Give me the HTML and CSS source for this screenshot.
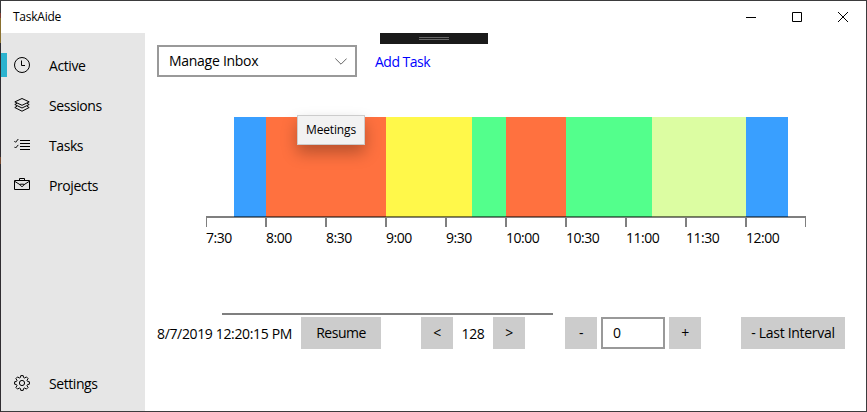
FILE: index.html
```html
<!DOCTYPE html>
<html lang="en">
<head>
<meta charset="utf-8">
<title>TaskAide</title>
<link rel="stylesheet" href="styles.css">
</head>
<body>
<div class="window">
  <header class="titlebar">
    <span class="title">TaskAide</span>
    <div class="caption-buttons">
      <svg viewBox="0 0 46 32"><path d="M18 16.5h10"/></svg>
      <svg viewBox="0 0 46 32"><path d="M18.5 11.5h9v9h-9z"/></svg>
      <svg viewBox="0 0 46 32"><path d="M18 11l10 10M28 11l-10 10"/></svg>
    </div>
  </header>
  <div class="body">
    <nav class="sidebar">
      <a class="nav-item active"><svg viewBox="0 0 16 16"><circle cx="8" cy="8" r="7.5"/><path d="M7.5 3.5v5h3.5"/></svg><span>Active</span></a>
      <a class="nav-item"><svg viewBox="0 0 16 16"><path d="M8 1.5l7.2 3.4L8 8.3.8 4.9zM3 6.3L.8 7.5 8 11l7.2-3.5L13 6.3M3 9.3L.8 10.5 8 14.2l7.2-3.7L13 9.3"/></svg><span>Sessions</span></a>
      <a class="nav-item"><svg viewBox="0 0 16 16"><path d="M6 3.5h10M6 6.5h10M6 9.5h10M6 12.5h10M.4 4.1l1.2 1.2L4.3 2M.4 9.8l1.2 1.2L4.3 7.9"/></svg><span>Tasks</span></a>
      <a class="nav-item"><svg viewBox="0 0 16 16"><path d="M.5 3.5h15v9H.5zM5.5 3.5v-2h5v2M1 4.5l5 3.2M15 4.5l-5 3.2M6.3 7.2h3.4v1.1L8.8 9.3H7.2l-.9-1z"/></svg><span>Projects</span></a>
      <a class="nav-item settings"><svg viewBox="0 0 16 16"><path d="M6.8.6h2.4l.4 1.9 1.1.5 1.7-1.1 1.7 1.7L13 5.3l.5 1.1 1.9.4v2.4l-1.9.4-.5 1.1 1.1 1.7-1.7 1.7-1.7-1.1-1.1.5-.4 1.9H6.8l-.4-1.9-1.1-.5-1.7 1.1-1.7-1.7L3 10.7l-.5-1.1-1.9-.4V6.8l1.9-.4L3 5.3 1.9 3.6l1.7-1.7L5.3 3l1.1-.5z"/><circle cx="8" cy="8" r="2.6"/></svg><span>Settings</span></a>
    </nav>
    <main class="content">
      <div class="debug-bar"></div>
      <div class="task-row">
        <div class="select"><span>Manage Inbox</span><svg viewBox="0 0 12 7"><path d="M.3.5L6 6.2 11.7.5"/></svg></div>
        <a class="add">Add Task</a>
      </div>
      <div class="chart">
        <div class="bars">
          <i class="blue" style="width:32px"></i><i class="orange" style="width:120px"></i><i class="yellow" style="width:86px"></i><i class="green" style="width:34px"></i><i class="orange" style="width:60px"></i><i class="green" style="width:86px"></i><i class="lime" style="width:94px"></i><i class="blue" style="width:42px"></i>
        </div>
        <svg class="axis" viewBox="0 0 600 11"><path d="M0 1h600"/><path d="M0 2v9M60 2v9M120 2v9M180 2v9M240 2v9M300 2v9M360 2v9M420 2v9M480 2v9M540 2v9M600 2v9"/></svg>
        <div class="hours"><span>7:30</span><span>8:00</span><span>8:30</span><span>9:00</span><span>9:30</span><span>10:00</span><span>10:30</span><span>11:00</span><span>11:30</span><span>12:00</span></div>
        <div class="tooltip">Meetings</div>
      </div>
      <div class="progress"></div>
      <div class="controls">
        <span class="stamp">8/7/2019 12:20:15 PM</span>
        <button class="resume">Resume</button>
        <button class="small prev">&lt;</button>
        <span class="count">128</span>
        <button class="small">&gt;</button>
        <button class="small minus">-</button>
        <div class="number">0</div>
        <button class="small">+</button>
        <button class="last">- Last Interval</button>
      </div>
    </main>
  </div>
</div>
</body>
</html>
```
FILE: styles.css
```css
* { box-sizing: border-box; }
body {
  margin: 0;
  width: 867px;
  height: 412px;
  padding: 1px;
  background: linear-gradient(#38383a 0 13px, #7b3b32 13px 18px, #89702f 18px 43px, #2f2c30 43px 157px, #77492f 157px 164px, #302d31 164px) left / 1px 100% no-repeat, #3b3b3d;
  font: 14px/20px "Open Sans", "Noto Sans", sans-serif;
  letter-spacing: -.35px;
  color: #000;
  overflow: hidden;
}
.window { height: 410px; background: #fff; display: flex; flex-direction: column; }
.titlebar { height: 32px; display: flex; justify-content: space-between; }
.title { padding-left: 12px; font-size: 12px; line-height: 32px; letter-spacing: -.25px; }
.caption-buttons { display: flex; }
.caption-buttons svg { width: 46px; height: 32px; }
svg { fill: none; stroke: #000; stroke-width: 1; flex: none; display: block; }
.body { flex: 1; display: flex; }
.sidebar { width: 144px; background: #e6e6e6; padding: 13px 0 7px; display: flex; flex-direction: column; }
.nav-item { height: 40px; padding-left: 13px; display: flex; align-items: center; gap: 19px; letter-spacing: -.42px; }
.nav-item svg { width: 16px; height: 16px; position: relative; top: -1px; }
.nav-item.active { background: linear-gradient(#2bb3cf, #2bb3cf) 0 7px / 6px 24px no-repeat; }
.settings { margin-top: auto; }
.content { flex: 1; position: relative; padding-left: 12px; }
.debug-bar {
  position: absolute; left: 235px; top: 0; width: 108px; height: 11px;
  background: linear-gradient(#666 0 1px, #1a1a1a 1px 2px, #666 2px 3px) 39px 4px / 30px 3px no-repeat #1a1a1a;
}
.task-row { height: 44px; padding-top: 12px; display: flex; gap: 18px; }
.select { width: 200px; height: 32px; border: 2px solid #999; display: flex; align-items: center; justify-content: space-between; padding: 0 8px 0 10px; letter-spacing: -.28px; }
.select svg { width: 12px; height: 7px; stroke: #666; }
.add { color: #00f; line-height: 34px; letter-spacing: -.5px; }
.chart { position: relative; width: 600px; margin: 40px 0 0 49px; }
.bars { height: 100px; padding-left: 28px; display: flex; }
.blue { background: #399fff; }
.orange { background: #ff713f; }
.yellow { background: #fff84a; }
.green { background: #53ff8c; }
.lime { background: #dcfda2; }
.axis { width: 600px; height: 11px; margin-top: -1px; stroke: rgba(0,0,0,.5); stroke-width: 2; }
.hours { display: flex; height: 20px; padding-top: 1px; letter-spacing: -.5px; }
.hours span { width: 60px; }
.tooltip {
  position: absolute; left: 91px; top: -2px; width: 68px; height: 30px;
  border: 1px solid #ccc; background: #f2f2f2; box-shadow: 0 8px 16px rgba(0,0,0,.28);
  text-align: center; font-size: 12px; line-height: 28px; letter-spacing: -.15px;
}
.progress { width: 331px; height: 2px; margin: 66px 0 2px 65px; background: #7f7f7f; }
.controls { height: 32px; display: flex; line-height: 34px; }
button { font: inherit; letter-spacing: inherit; line-height: 32px; background: #ccc; color: #000; border: 0; padding: 0; height: 32px; text-align: center; white-space: nowrap; }
.stamp { width: 144px; white-space: nowrap; }
.resume { width: 80px; letter-spacing: -.5px; }
.small { width: 32px; }
.prev, .minus, .last { margin-left: 40px; }
.count { width: 40px; text-align: center; }
.number { width: 64px; height: 32px; margin: 0 4px; border: 2px solid #999; padding-left: 10px; line-height: 27px; }
.last { width: 104px; letter-spacing: -.3px; }
```
